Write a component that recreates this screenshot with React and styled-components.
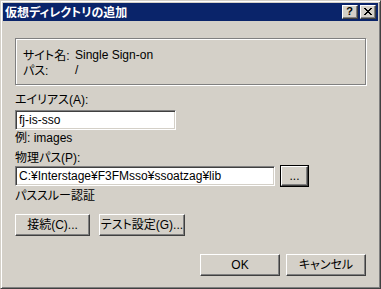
import React from "react";
import styled, { createGlobalStyle } from "styled-components";

const Global = createGlobalStyle`
  html, body { margin: 0; padding: 0; background: #d4d0c8; }
  body { width: 381px; height: 289px; overflow: hidden; }
  * { box-sizing: border-box; }
`;

const FONT = `"Liberation Sans", "Noto Sans CJK JP", sans-serif`;

const Window = styled.div`
  width: 381px;
  height: 289px;
  background: #d4d0c8;
  border-top: 1px solid #d4d0c8;
  border-left: 1px solid #d4d0c8;
  border-right: 1px solid #404040;
  border-bottom: 1px solid #404040;
  box-shadow: inset 1px 1px 0 #ffffff, inset -1px -1px 0 #808080;
  padding: 2px;
  display: flex;
  flex-direction: column;
  font-family: ${FONT};
  font-size: 12px;
  font-feature-settings: "palt";
  color: #000;
`;

const TitleBar = styled.div`
  height: 18px;
  background: #0a246a;
  display: flex;
  align-items: center;
  padding: 0 2px 0 2px;
  gap: 2px;
`;

const Title = styled.div`
  flex: 1;
  color: #fff;
  font-weight: bold;
  font-size: 12px;
  font-family: "Noto Sans CJK JP", sans-serif;
  font-feature-settings: "palt";
  line-height: 18px;
`;

const CaptionButton = styled.div`
  width: 16px;
  height: 14px;
  background: #d4d0c8;
  border-top: 1px solid #fff;
  border-left: 1px solid #fff;
  border-right: 1px solid #404040;
  border-bottom: 1px solid #404040;
  box-shadow: inset -1px -1px 0 #808080;
  display: flex;
  align-items: center;
  justify-content: center;
  font-weight: bold;
  font-size: 11px;
  line-height: 1;
  font-family: "Liberation Sans", sans-serif;
  padding-right: 1px;
  padding-bottom: 1px;
`;

const Body = styled.div`
  flex: 1;
  display: flex;
  flex-direction: column;
  padding: 0 12px;
`;

const GroupBox = styled.div`
  margin-top: 17px;
  height: 47px;
  border: 1px solid #808080;
  box-shadow: inset 1px 1px 0 #fff, 1px 1px 0 #fff;
  padding: 8px 0 0 7px;
  display: grid;
  grid-template-columns: 52px auto;
  grid-auto-rows: 15px;
  align-items: center;
`;

const Label = styled.div`
  line-height: 15px;
  height: 15px;
  margin-top: ${(p) => p.$mt || 0}px;
  white-space: nowrap;
`;

const TextInput = styled.div`
  width: ${(p) => p.$w}px;
  height: 20px;
  background: #fff;
  border-top: 1px solid #808080;
  border-left: 1px solid #808080;
  border-right: 1px solid #fff;
  border-bottom: 1px solid #fff;
  box-shadow: inset 1px 1px 0 #404040, inset -1px -1px 0 #d4d0c8;
  padding: 0 3px;
  line-height: 18px;
  white-space: nowrap;
  overflow: hidden;
  margin-top: ${(p) => p.$mt || 0}px;
`;

const Row = styled.div`
  display: flex;
  align-items: flex-start;
  gap: ${(p) => p.$gap || 0}px;
  margin-top: ${(p) => p.$mt || 0}px;
  justify-content: ${(p) => p.$justify || "flex-start"};
`;

const Button = styled.div`
  width: ${(p) => p.$w}px;
  height: ${(p) => p.$h || 22}px;
  background: #d4d0c8;
  border-top: 1px solid #fff;
  border-left: 1px solid #fff;
  border-right: 1px solid #404040;
  border-bottom: 1px solid #404040;
  box-shadow: inset -1px -1px 0 #808080;
  display: flex;
  align-items: center;
  justify-content: center;
  white-space: nowrap;
  line-height: 1;
  ${(p) =>
    p.$default &&
    `
    outline: 1px solid #000;
    outline-offset: 0;
  `}
`;

export default function App() {
  return (
    <>
      <Global />
      <Window>
        <TitleBar>
          <Title>仮想ディレクトリの追加</Title>
          <CaptionButton>?</CaptionButton>
          <CaptionButton>
            <svg width="8" height="7" viewBox="0 0 8 7" shapeRendering="crispEdges">
              <path
                d="M0 0h2v1H0zM6 0h2v1H6zM1 1h2v1H1zM5 1h2v1H5zM2 2h4v1H2zM3 3h2v1H3zM2 4h4v1H2zM1 5h2v1H1zM5 5h2v1H5zM0 6h2v1H0zM6 6h2v1H6z"
                fill="#000"
              />
            </svg>
          </CaptionButton>
        </TitleBar>
        <Body>
          <GroupBox>
            <div>サイト名:</div>
            <div>Single Sign-on</div>
            <div>パス:</div>
            <div>/</div>
          </GroupBox>
          <Label $mt={8}>エイリアス(A):</Label>
          <TextInput $w={161} $mt={2}>fj-is-sso</TextInput>
          <Label $mt={1}>例: images</Label>
          <Label $mt={5}>物理パス(P):</Label>
          <Row $gap={6}>
            <TextInput $w={260}>C:¥Interstage¥F3FMsso¥ssoatzag¥lib</TextInput>
            <Button $w={27} $h={20} $default>...</Button>
          </Row>
          <Label $mt={3}>パススルー認証</Label>
          <Row $gap={9} $mt={10}>
            <Button $w={75}>接続(C)...</Button>
            <Button $w={86}>テスト設定(G)...</Button>
          </Row>
          <Row $gap={6} $mt={18} $justify="flex-end">
            <Button $w={80}>OK</Button>
            <Button $w={80}>キャンセル</Button>
          </Row>
        </Body>
      </Window>
    </>
  );
}
